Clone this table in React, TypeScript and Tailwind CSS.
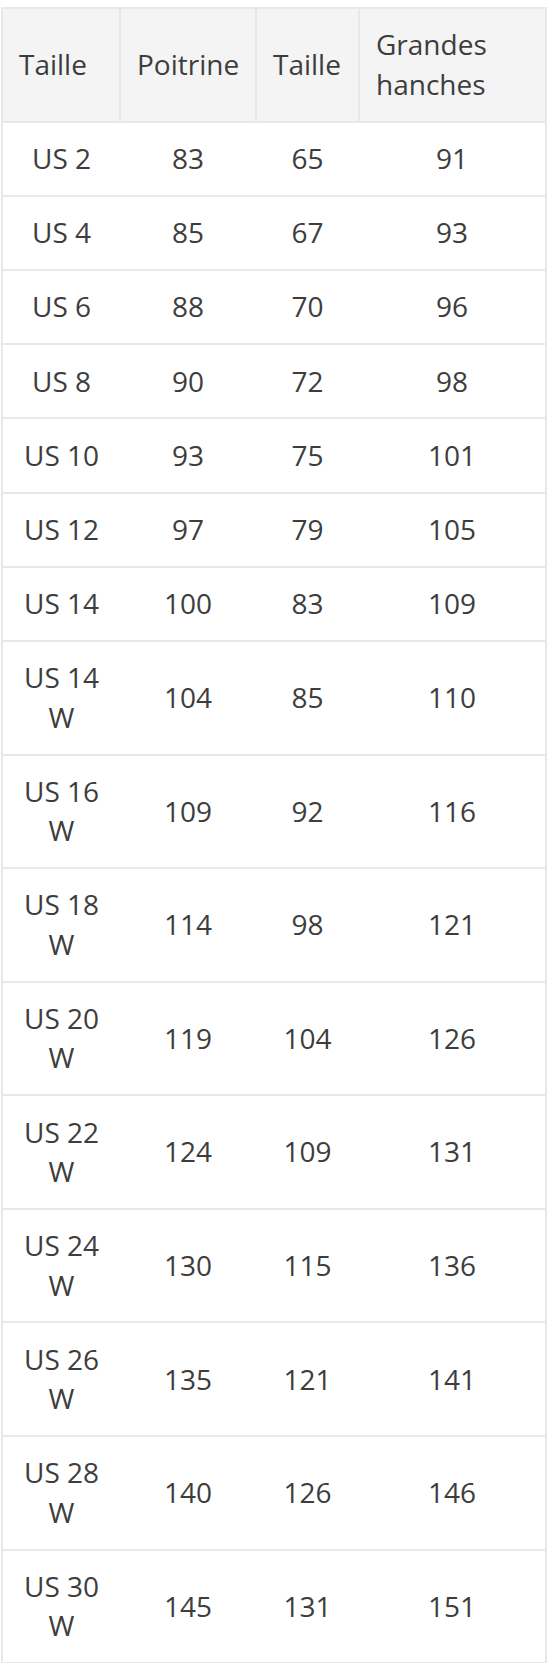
const rows: [string, number, number, number][] = [
  ["US 2", 83, 65, 91],
  ["US 4", 85, 67, 93],
  ["US 6", 88, 70, 96],
  ["US 8", 90, 72, 98],
  ["US 10", 93, 75, 101],
  ["US 12", 97, 79, 105],
  ["US 14", 100, 83, 109],
  ["US 14 W", 104, 85, 110],
  ["US 16 W", 109, 92, 116],
  ["US 18 W", 114, 98, 121],
  ["US 20 W", 119, 104, 126],
  ["US 22 W", 124, 109, 131],
  ["US 24 W", 130, 115, 136],
  ["US 26 W", 135, 121, 141],
  ["US 28 W", 140, 126, 146],
  ["US 30 W", 145, 131, 151],
];

export default function App() {
  return (
    <main className="bg-white h-[1663px] pt-[7px] pl-[1px] overflow-hidden">
      {/* SIZE TABLE */}
      <table
        className="w-[546px] table-fixed border-collapse border-2 border-[#e8e8e8] text-[28px] leading-[39.4px] text-[#3d3d3d]"
        style={{ fontFamily: '"Open Sans", "Noto Sans", sans-serif' }}
      >
        <colgroup>
          <col className="w-[118px]" />
          <col className="w-[136px]" />
          <col className="w-[103px]" />
          <col />
        </colgroup>
        <thead>
          <tr className="bg-[#f4f4f4]">
            {["Taille", "Poitrine", "Taille", "Grandes hanches"].map((h, i) => (
              <th
                key={i}
                className="border-2 border-[#e8e8e8] px-[16px] py-[16.4px] text-left font-normal"
              >
                {h}
              </th>
            ))}
          </tr>
        </thead>
        <tbody>
          {rows.map((r, i) => (
            <tr key={i} className="border-t-2 border-[#e8e8e8]">
              {r.map((c, j) => (
                <td key={j} className="px-[16px] py-[16.4px] text-center align-middle">
                  {c}
                </td>
              ))}
            </tr>
          ))}
        </tbody>
      </table>
    </main>
  );
}
